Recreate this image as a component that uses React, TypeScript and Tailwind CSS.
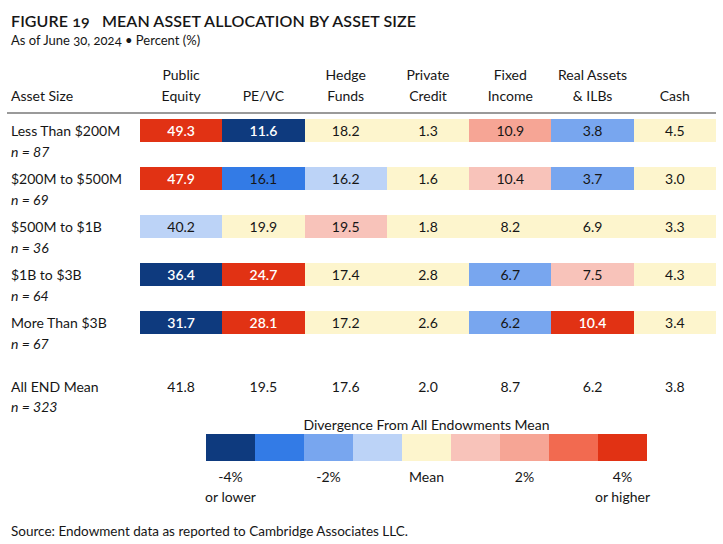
import React from "react";

// Divergence palette, darkest blue to strongest red
const C = {
  navy: "bg-[#0e3a7e] text-white font-semibold",
  blue: "bg-[#337be6]",
  mid: "bg-[#78a6ef]",
  pale: "bg-[#bcd3f7]",
  cream: "bg-[#fdf5cd]",
  pink: "bg-[#f8c3ba]",
  salmon: "bg-[#f6a595]",
  coral: "bg-[#f26a50]",
  red: "bg-[#e13214] text-white font-semibold",
};

type Cell = [string, keyof typeof C];

const rows: { label: string; n: string; cells: Cell[] }[] = [
  {
    label: "Less Than $200M",
    n: "87",
    cells: [["49.3", "red"], ["11.6", "navy"], ["18.2", "cream"], ["1.3", "cream"], ["10.9", "salmon"], ["3.8", "mid"], ["4.5", "cream"]],
  },
  {
    label: "$200M to $500M",
    n: "69",
    cells: [["47.9", "red"], ["16.1", "blue"], ["16.2", "pale"], ["1.6", "cream"], ["10.4", "pink"], ["3.7", "mid"], ["3.0", "cream"]],
  },
  {
    label: "$500M to $1B",
    n: "36",
    cells: [["40.2", "pale"], ["19.9", "cream"], ["19.5", "pink"], ["1.8", "cream"], ["8.2", "cream"], ["6.9", "cream"], ["3.3", "cream"]],
  },
  {
    label: "$1B to $3B",
    n: "64",
    cells: [["36.4", "navy"], ["24.7", "red"], ["17.4", "cream"], ["2.8", "cream"], ["6.7", "mid"], ["7.5", "pink"], ["4.3", "cream"]],
  },
  {
    label: "More Than $3B",
    n: "67",
    cells: [["31.7", "navy"], ["28.1", "red"], ["17.2", "cream"], ["2.6", "cream"], ["6.2", "mid"], ["10.4", "red"], ["3.4", "cream"]],
  },
];

const meanRow = ["41.8", "19.5", "17.6", "2.0", "8.7", "6.2", "3.8"];

const headers: [string, string][] = [
  ["Public", "Equity"],
  ["", "PE/VC"],
  ["Hedge", "Funds"],
  ["Private", "Credit"],
  ["Fixed", "Income"],
  ["Real Assets", "& ILBs"],
  ["", "Cash"],
];

const legend: (keyof typeof C)[] = ["navy", "blue", "mid", "pale", "cream", "pink", "salmon", "coral", "red"];
const legendLabels: [string, string][] = [
  ["-4%", "or lower"],
  ["", ""],
  ["-2%", ""],
  ["", ""],
  ["Mean", ""],
  ["", ""],
  ["2%", ""],
  ["", ""],
  ["4%", "or higher"],
];

const grid = "grid grid-cols-[133px_repeat(7,1fr)]";

const App = () => {
  return (
    <div className="w-[723px] h-[544px] bg-white px-[7px] pt-[10px] text-[#161616] font-['Lato',sans-serif] overflow-hidden">
      {/* Title */}
      <div className="pl-1">
        <h1 className="text-[16px] leading-[22px] font-semibold tracking-[0.1px] oldstyle-nums">
          FIGURE 19&nbsp;&nbsp; MEAN ASSET ALLOCATION BY ASSET SIZE
        </h1>
        <p className="text-[13px] leading-[16px] oldstyle-nums">As of June 30, 2024 • Percent (%)</p>
      </div>

      {/* Header */}
      <div className={`${grid} mt-[16px] pb-[6px] text-[14px] leading-[21px]`}>
        <div className="pl-1 flex items-end">Asset Size</div>
        {headers.map(([a, b], i) => (
          <div key={i} className="flex flex-col items-center justify-end">
            <span>{a || "\u00a0"}</span>
            <span>{b}</span>
          </div>
        ))}
      </div>
      <div className="h-[2px] bg-[#9a9a9a]" />

      {/* Rows */}
      <div className="mt-[5px] flex flex-col gap-[5px] text-[14px]">
        {rows.map((row) => (
          <div key={row.label}>
            <div className={`${grid} h-[23px] leading-[23px]`}>
              <div className="pl-1">{row.label}</div>
              {row.cells.map(([v, c], i) => (
                <div key={i} className={`${C[c]} text-center`}>
                  {v}
                </div>
              ))}
            </div>
            <div className="pl-1 h-[20px] leading-[20px] italic">n = {row.n}</div>
          </div>
        ))}

        <div className="mt-[16px]">
          <div className={`${grid} h-[23px] leading-[23px]`}>
            <div className="pl-1">All END Mean</div>
            {meanRow.map((v, i) => (
              <div key={i} className="text-center">
                {v}
              </div>
            ))}
          </div>
          <div className="pl-1 h-[18px] leading-[18px] italic">n = 323</div>
        </div>
      </div>

      {/* Legend */}
      <div className="ml-[199px] w-[441px] text-[14px]">
        <div className="text-center leading-[18px]">Divergence From All Endowments Mean</div>
        <div className="grid grid-cols-9 h-[27px]">
          {legend.map((c) => (
            <div key={c} className={C[c]} />
          ))}
        </div>
        <div className="grid grid-cols-9 mt-[6px] leading-[20px]">
          {legendLabels.map(([a, b], i) => (
            <div key={i} className="flex flex-col items-center whitespace-nowrap">
              <span>{a || "\u00a0"}</span>
              {b && <span>{b}</span>}
            </div>
          ))}
        </div>
      </div>

      {/* Source */}
      <p className="pl-1 mt-[16px] text-[13.5px] leading-[16px]">
        Source: Endowment data as reported to Cambridge Associates LLC.
      </p>
    </div>
  );
};

export default App;
